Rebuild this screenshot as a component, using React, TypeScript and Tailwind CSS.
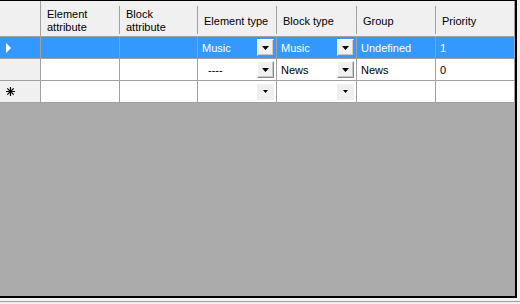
import React from "react";

const font = { fontFamily: '"Liberation Sans", Arial, sans-serif' };

function Sep({ full }: { full?: boolean }) {
  return full ? (
    <div className="w-px self-stretch bg-[#a0a0a0]" />
  ) : (
    <div className="w-px self-stretch mt-[5px] mb-[2px] bg-[#a0a0a0]" />
  );
}

function HeadCell({ w, children }: { w: string; children?: React.ReactNode }) {
  return (
    <div className={`${w} flex items-center pl-[6px] pt-[5px] leading-[13px] text-black`}>
      {children}
    </div>
  );
}

function DropBtn({ flat }: { flat?: boolean }) {
  if (flat) {
    return (
      <div className="w-[17px] h-[16px] bg-[#f0f0f0] flex items-center justify-center">
        <svg width="5" height="3" viewBox="0 0 5 3">
          <path d="M0 0H5L2.5 3Z" fill="#000" />
        </svg>
      </div>
    );
  }
  return (
    <div className="w-[17px] h-[17px] bg-[#f0f0f0] border-t border-l border-t-white border-l-white border-r border-b border-r-[#8a8a8a] border-b-[#8a8a8a] shadow-[inset_-1px_-1px_0_#c8c8c8] flex items-center justify-center">
      <svg width="7" height="4" viewBox="0 0 7 4">
        <path d="M0 0H7L3.5 4Z" fill="#000" />
      </svg>
    </div>
  );
}

function Cell({
  w,
  children,
  sel,
  combo,
  flat,
  pl = "pl-[4px]",
}: {
  w: string;
  children?: React.ReactNode;
  sel?: boolean;
  combo?: boolean;
  flat?: boolean;
  pl?: string;
}) {
  return (
    <div
      className={`${w} h-full flex items-center justify-between border-r border-[#a0a0a0] ${
        sel ? "bg-[#3399ff] text-white" : "bg-white text-black"
      }`}
    >
      <span className={`${pl} pt-[1px]`}>{children}</span>
      {combo && (
        <div className="mr-[2px]">
          <DropBtn flat={flat} />
        </div>
      )}
    </div>
  );
}

const W = ["w-[79px]", "w-[78px]", "w-[79px]", "w-[80px]", "w-[79px]", "w-[79px]"];

function Row({
  head,
  sel,
  cells,
}: {
  head: React.ReactNode;
  sel?: boolean;
  cells: { t?: string; combo?: boolean; flat?: boolean; pl?: string }[];
}) {
  return (
    <div className="flex h-[22px] border-b border-[#a0a0a0]">
      <div
        className={`w-[41px] h-full flex items-center border-r border-[#a0a0a0] ${
          sel ? "bg-[#3399ff]" : "bg-[#f0f0f0]"
        }`}
      >
        {head}
      </div>
      {cells.map((c, i) => (
        <Cell key={i} w={W[i]} sel={sel} combo={c.combo} flat={c.flat} pl={c.pl}>
          {c.t}
        </Cell>
      ))}
    </div>
  );
}

export default function App() {
  return (
    <div className="w-[520px] h-[304px] bg-[#f0f0f0] text-[11px] overflow-hidden" style={font}>
      <div className="w-[517px] h-[298px] border-t border-t-black border-r-2 border-r-black border-b-2 border-b-black bg-[#ababab] flex flex-col">
        <div className="flex h-[36px] bg-[#f0f0f0] border-b border-[#a0a0a0]">
          <div className="w-[40px]" />
          <Sep full />
          <HeadCell w="w-[78px]">
            <span>
              Element
              <br />
              attribute
            </span>
          </HeadCell>
          <Sep />
          <HeadCell w="w-[77px]">
            <span>
              Block
              <br />
              attribute
            </span>
          </HeadCell>
          <Sep />
          <HeadCell w="w-[78px]">Element type</HeadCell>
          <Sep />
          <HeadCell w="w-[79px]">Block type</HeadCell>
          <Sep />
          <HeadCell w="w-[78px]">Group</HeadCell>
          <Sep />
          <HeadCell w="w-[78px]">Priority</HeadCell>
          <Sep full />
        </div>
        <Row
          sel
          head={
            <svg width="6" height="10" viewBox="0 0 6 10" className="ml-[6px]">
              <path d="M0 0L5 5L0 10Z" fill="#fff" />
            </svg>
          }
          cells={[
            {},
            {},
            { t: "Music", combo: true },
            { t: "Music", combo: true },
            { t: "Undefined" },
            { t: "1" },
          ]}
        />
        <Row
          head={null}
          cells={[
            {},
            {},
            { t: "----", combo: true, pl: "pl-[10px]" },
            { t: "News", combo: true },
            { t: "News" },
            { t: "0" },
          ]}
        />
        <Row
          head={
            <svg width="9" height="9" viewBox="0 0 9 9" className="ml-[6px]">
              <path
                d="M4.5 0V9M0 4.5H9M1.3 1.3L7.7 7.7M7.7 1.3L1.3 7.7"
                stroke="#000"
                strokeWidth="1.2"
              />
            </svg>
          }
          cells={[
            {},
            {},
            { combo: true, flat: true },
            { combo: true, flat: true },
            {},
            {},
          ]}
        />
      </div>
      <div className="mt-[3px] h-px w-[520px] bg-[#a0a0a0]" />
    </div>
  );
}
